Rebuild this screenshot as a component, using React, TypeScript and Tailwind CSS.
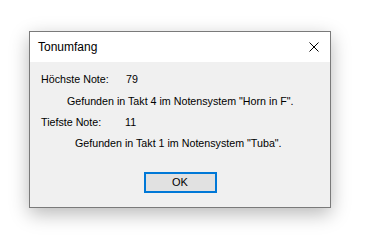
export default function App() {
  return (
    <div className="w-[386px] h-[241px] bg-white pt-[31px] pl-[29px] font-['Liberation_Sans',sans-serif] text-[10.7px] text-black">
      <div className="w-[302px] h-[177px] border border-[#7a7a7a] bg-[#f0f0f0] shadow-[0_6px_18px_rgba(0,0,0,0.28)] flex flex-col">
        <div className="h-[30px] bg-white flex items-center justify-between pl-[8px] pr-[8px]">
          <span className="text-[12px]">Tonumfang</span>
          <svg width="10" height="10" viewBox="0 0 10 10" className="mr-[3px]">
            <path d="M0.5 0.5 L9.5 9.5 M9.5 0.5 L0.5 9.5" stroke="#000" strokeWidth="1" />
          </svg>
        </div>
        <div className="flex flex-col pl-[11px] pt-[10px]">
          <div className="flex h-[14px] items-center">
            <span className="w-[85px]">Höchste Note:</span>
            <span>79</span>
          </div>
          <div className="h-[14px] mt-[8px] flex items-center pl-[26px]">
            Gefunden in Takt 4 im Notensystem "Horn in F".
          </div>
          <div className="flex h-[14px] items-center mt-[7px]">
            <span className="w-[84px]">Tiefste Note:</span>
            <span>11</span>
          </div>
          <div className="h-[14px] mt-[7px] flex items-center pl-[34px]">
            Gefunden in Takt 1 im Notensystem "Tuba".
          </div>
        </div>
        <div className="flex justify-center mt-[22px]">
          <button className="w-[73px] h-[21px] border-2 border-[#0078d7] bg-[#e1e1e1] flex items-center justify-center text-[11px]">
            OK
          </button>
        </div>
      </div>
    </div>
  );
}
